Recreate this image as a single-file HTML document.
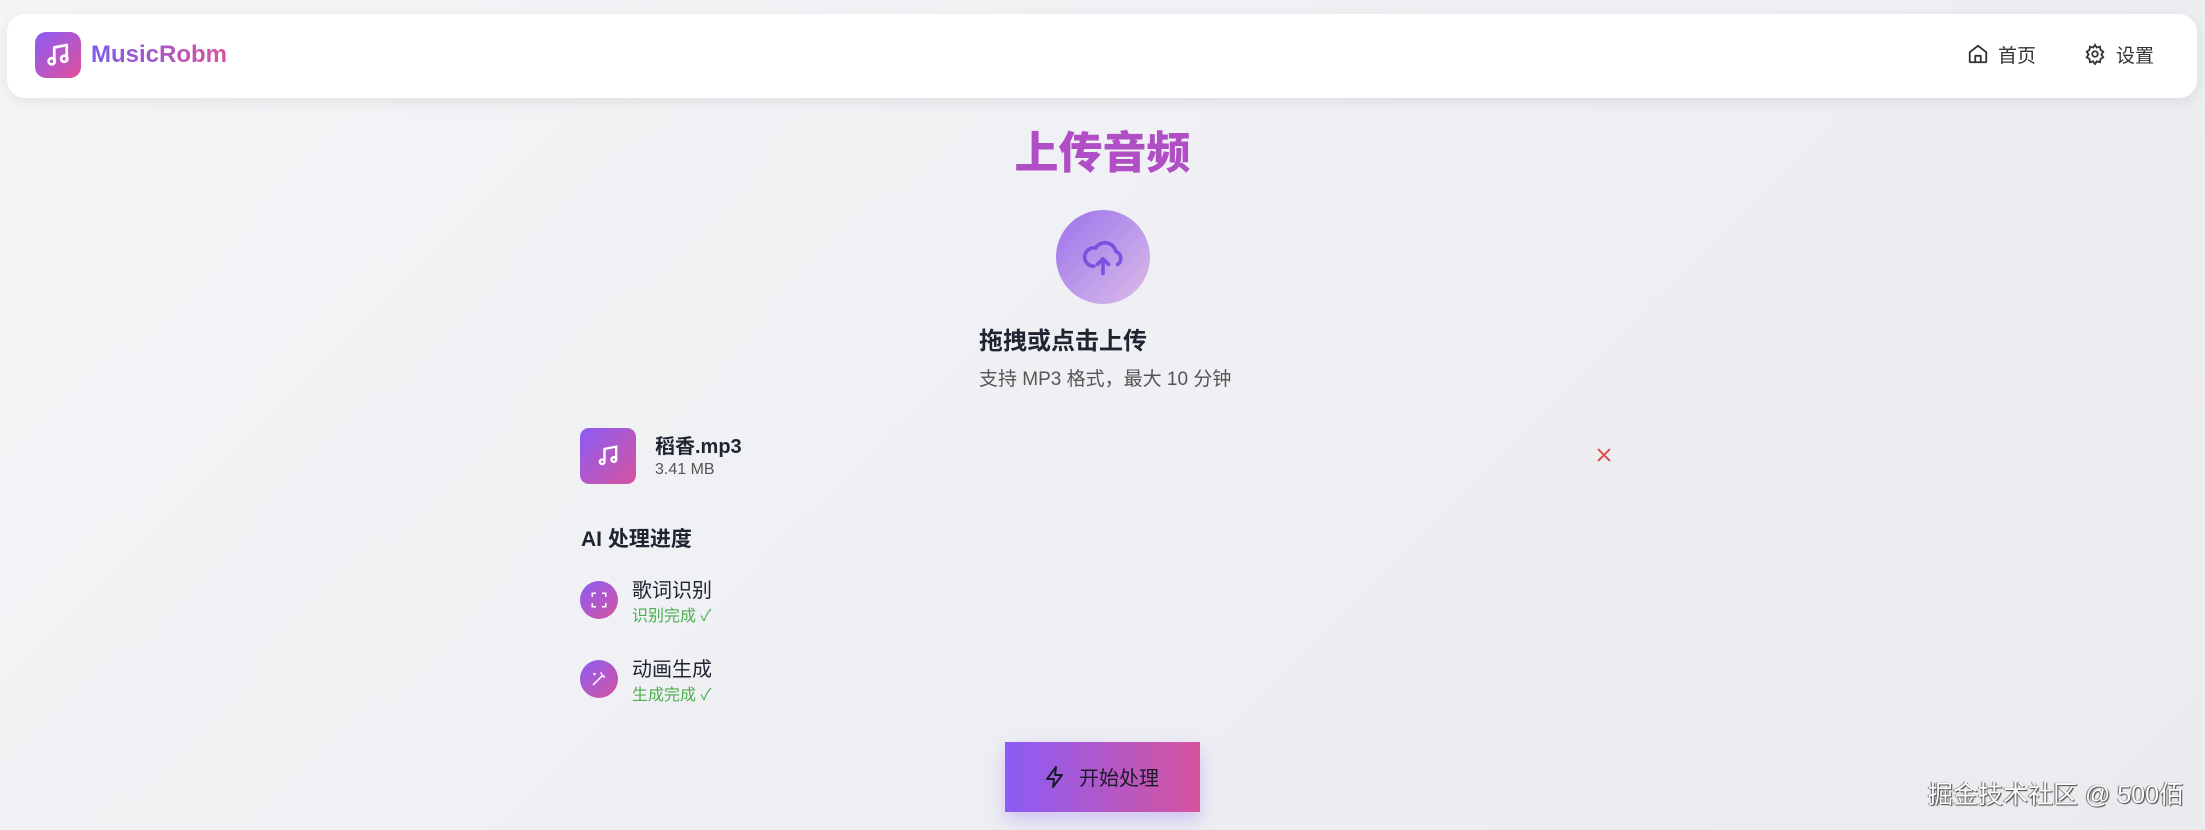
<!DOCTYPE html>
<html><head><meta charset="utf-8"><style>
*{margin:0;padding:0;box-sizing:border-box}
body{width:2205px;height:830px;overflow:hidden;background:linear-gradient(135deg,#f4f5f7,#eaebef);font-family:"Liberation Sans","Noto Sans CJK SC",sans-serif;position:relative;color:#1f2430}
.nav{position:absolute;left:7px;top:14px;width:2190px;height:84px;background:#fff;border-radius:18px;box-shadow:0 4px 14px rgba(0,0,0,.08)}
.logo{position:absolute;left:28px;top:18px;width:46px;height:46px;border-radius:11px;background:linear-gradient(135deg,#8b5cf6,#e0509a)}
.brand{position:absolute;left:84px;top:27px;font-size:24px;font-weight:bold;background:linear-gradient(90deg,#7c5be8,#d6549e);-webkit-background-clip:text;color:transparent}
.navr{position:absolute;top:27px;font-size:19px;color:#333}
.abs{position:absolute}
h1{position:absolute;left:0;width:2205px;text-align:center;top:117px;font-size:44px;font-weight:900;color:#b04ec5}
.circle{position:absolute;left:1056px;top:210px;width:94px;height:94px;border-radius:50%;background:linear-gradient(135deg,#9a72ec,#dcbde8)}
.step{position:absolute;left:580px;width:38px;height:38px;border-radius:50%;background:linear-gradient(135deg,#8b5cf6,#d6549e)}
.green{color:#4caf50;font-size:16px}
.btn{position:absolute;left:1005px;top:742px;width:195px;height:70px;background:linear-gradient(90deg,#8b5cf6,#d6549e);box-shadow:0 8px 18px rgba(139,92,246,.3);font-size:20px;color:#1a1a2a}
</style></head><body>
<div class="nav">
 <div class="logo"><svg style="position:absolute;left:8px;top:8px" width="30" height="30" viewBox="0 0 24 24" fill="none" stroke="#fff" stroke-width="2.2" stroke-linecap="round" stroke-linejoin="round"><path d="M9 17V6l10-2v11"/><circle cx="7" cy="17" r="2.5"/><circle cx="17" cy="15" r="2.5"/></svg></div>
 <div class="brand">MusicRobm</div>
 <svg class="abs" style="left:1960px;top:29px" width="22" height="22" viewBox="0 0 24 24" fill="none" stroke="#333" stroke-width="2" stroke-linejoin="round"><path d="M3 10l9-7 9 7v10a1 1 0 0 1-1 1H4a1 1 0 0 1-1-1z"/><path d="M9 21v-7h6v7"/></svg>
 <div class="navr" style="left:1991px">首页</div>
 <svg class="abs" style="left:2077px;top:29px" width="22" height="22" viewBox="0 0 24 24" fill="none" stroke="#333" stroke-width="2"><circle cx="12" cy="12" r="3"/><path d="M12 2l2 3 3.5-1 .5 3.5 3 2-2 3 2 3-3 2-.5 3.5-3.5-1-2 3-2-3-3.5 1-.5-3.5-3-2 2-3-2-3 3-2 .5-3.5 3.5 1z"/></svg>
 <div class="navr" style="left:2109px">设置</div>
</div>
<h1>上传音频</h1>
<div class="circle"><svg style="position:absolute;left:25px;top:25px" width="44" height="44" viewBox="0 0 24 24" fill="none" stroke="#7b52e0" stroke-width="2" stroke-linecap="round" stroke-linejoin="round"><path d="M7 17a5 5 0 1 1 1-9.9A6 6 0 0 1 19 9a4 4 0 0 1 1 7"/><path d="M12 21v-8M9 16l3-3 3 3"/></svg></div>
<div class="abs" style="left:979px;top:321px;font-size:24px;font-weight:bold">拖拽或点击上传</div>
<div class="abs" style="left:979px;top:364px;font-size:19px;color:#555">支持 MP3 格式，最大 10 分钟</div>
<div class="abs" style="left:580px;top:428px;width:56px;height:56px;border-radius:9px;background:linear-gradient(135deg,#8b5cf6,#d6549e)"><svg style="position:absolute;left:14px;top:14px" width="28" height="28" viewBox="0 0 24 24" fill="none" stroke="#fff" stroke-width="2" stroke-linecap="round"><path d="M9 17V6l10-2v11"/><circle cx="7" cy="17" r="2"/><circle cx="17" cy="15" r="2"/></svg></div>
<div class="abs" style="left:655px;top:430px;font-size:20px;font-weight:bold">稻香.mp3</div>
<div class="abs" style="left:655px;top:461px;font-size:16px;color:#555">3.41 MB</div>
<svg class="abs" style="left:1596px;top:447px" width="16" height="16" viewBox="0 0 16 16" stroke="#e05050" stroke-width="2"><path d="M2 2l12 12M14 2L2 14"/></svg>
<div class="abs" style="left:581px;top:523px;font-size:21px;font-weight:bold">AI 处理进度</div>
<div class="step" style="top:581px"><svg style="position:absolute;left:10px;top:10px" width="18" height="18" viewBox="0 0 24 24" fill="none" stroke="#fff" stroke-width="2"><path d="M3 8V3h5M16 3h5v5M21 16v5h-5M8 21H3v-5"/></svg></div>
<div class="abs" style="left:632px;top:574px;font-size:20px">歌词识别</div>
<div class="abs green" style="left:632px;top:602px">识别完成 ✓</div>
<div class="step" style="top:660px"><svg style="position:absolute;left:10px;top:10px" width="18" height="18" viewBox="0 0 24 24" fill="none" stroke="#fff" stroke-width="2"><path d="M4 20L18 6M15 3v3M20 9h-3M6 4v3M4.5 5.5h3"/></svg></div>
<div class="abs" style="left:632px;top:653px;font-size:20px">动画生成</div>
<div class="abs green" style="left:632px;top:681px">生成完成 ✓</div>
<div class="btn"><svg style="position:absolute;left:38px;top:23px" width="24" height="24" viewBox="0 0 24 24" fill="none" stroke="#1a1a2a" stroke-width="2" stroke-linejoin="round"><path d="M13 2L4 14h7l-1 8 9-12h-7z"/></svg><span style="position:absolute;left:74px;top:20px">开始处理</span></div>
<div class="abs" style="left:1928px;top:775px;font-size:25px;color:#fff;text-shadow:1px 1px 1px #444,-1px 0 1px #666">掘金技术社区 @ 500佰</div>
</body></html>
